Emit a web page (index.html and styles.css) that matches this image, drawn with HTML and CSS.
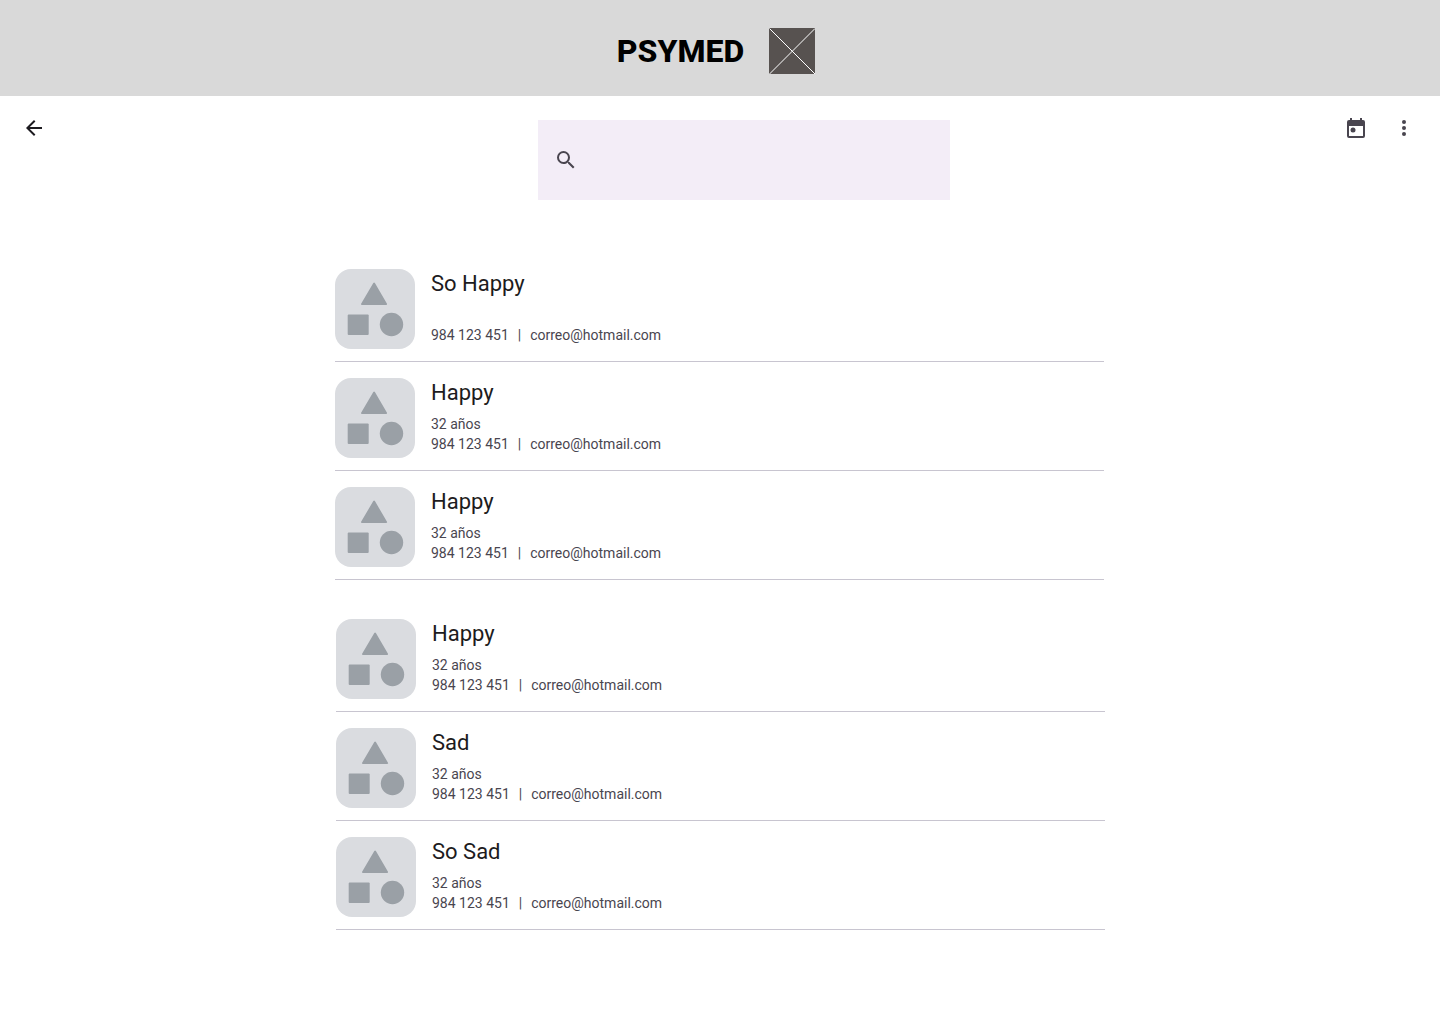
FILE: index.html
```html
<!DOCTYPE html>
<html lang="es">
<head>
<meta charset="utf-8">
<meta name="viewport" content="width=device-width, initial-scale=1">
<title>PSYMED</title>
<link rel="stylesheet" href="styles.css">
</head>
<body>
<svg class="sprite" aria-hidden="true">
  <symbol id="shapes" viewBox="0 0 80 80">
    <path d="M38.3 14a1 1 0 0 1 1.6 0L52 34.8a.8.8 0 0 1-.7 1.2H26.8a.8.8 0 0 1-.7-1.2z"/>
    <rect x="12.7" y="45.5" width="21" height="20.5" rx="1"/>
    <circle cx="56.5" cy="55.5" r="11.7"/>
  </symbol>
</svg>
<header class="banner">
  <h1 class="brand">PSYMED</h1>
  <svg class="logo" viewBox="0 0 46 46" aria-hidden="true"><path fill="#575250" d="M0 0h46v46H0z"/><path stroke="#fff" d="M.5.5l45.5 45.5M46 .5l-45.5 45.5"/></svg>
</header>
<nav class="toolbar">
  <button class="icon-button back" type="button" aria-label="Volver">
    <svg class="icon" viewBox="0 0 24 24"><path d="M20 11H7.83l5.59-5.59L12 4l-8 8 8 8 1.41-1.41L7.83 13H20z"/></svg>
  </button>
  <label class="search">
    <svg class="icon" viewBox="0 0 24 24" aria-hidden="true"><path d="M15.5 14h-.79l-.28-.27A6.47 6.47 0 0 0 16 9.5 6.5 6.5 0 1 0 9.5 16c1.61 0 3.09-.59 4.23-1.57l.27.28v.79l5 4.99L20.49 19zm-6 0a4.5 4.5 0 1 1 0-9 4.5 4.5 0 0 1 0 9z"/></svg>
    <input class="search-input" type="search" aria-label="Buscar">
  </label>
  <div class="actions">
    <button class="icon-button" type="button" aria-label="Calendario">
      <svg class="icon" viewBox="0 0 24 24"><path d="M19 4h-1V2h-2v2H8V2H6v2H5a2 2 0 0 0-2 2v14a2 2 0 0 0 2 2h14a2 2 0 0 0 2-2V6a2 2 0 0 0-2-2zm0 16H5V10h14z"/><circle cx="9" cy="14" r="2.5"/></svg>
    </button>
    <button class="icon-button" type="button" aria-label="Más opciones">
      <svg class="icon" viewBox="0 0 24 24"><circle cx="12" cy="6" r="2"/><circle cx="12" cy="12" r="2"/><circle cx="12" cy="18" r="2"/></svg>
    </button>
  </div>
</nav>
<main class="patients">
  <ul class="list">
    <li class="item">
      <svg class="thumb" aria-hidden="true"><use href="#shapes"/></svg>
      <div class="details"><h2 class="name">So Happy</h2><p class="age"></p><p class="contact"><span>984 123 451</span><span>|</span><span>correo@hotmail.com</span></p></div>
    </li>
    <li class="item">
      <svg class="thumb" aria-hidden="true"><use href="#shapes"/></svg>
      <div class="details"><h2 class="name">Happy</h2><p class="age">32 años</p><p class="contact"><span>984 123 451</span><span>|</span><span>correo@hotmail.com</span></p></div>
    </li>
    <li class="item">
      <svg class="thumb" aria-hidden="true"><use href="#shapes"/></svg>
      <div class="details"><h2 class="name">Happy</h2><p class="age">32 años</p><p class="contact"><span>984 123 451</span><span>|</span><span>correo@hotmail.com</span></p></div>
    </li>
  </ul>
  <ul class="list list-end">
    <li class="item">
      <svg class="thumb" aria-hidden="true"><use href="#shapes"/></svg>
      <div class="details"><h2 class="name">Happy</h2><p class="age">32 años</p><p class="contact"><span>984 123 451</span><span>|</span><span>correo@hotmail.com</span></p></div>
    </li>
    <li class="item">
      <svg class="thumb" aria-hidden="true"><use href="#shapes"/></svg>
      <div class="details"><h2 class="name">Sad</h2><p class="age">32 años</p><p class="contact"><span>984 123 451</span><span>|</span><span>correo@hotmail.com</span></p></div>
    </li>
    <li class="item">
      <svg class="thumb" aria-hidden="true"><use href="#shapes"/></svg>
      <div class="details"><h2 class="name">So Sad</h2><p class="age">32 años</p><p class="contact"><span>984 123 451</span><span>|</span><span>correo@hotmail.com</span></p></div>
    </li>
  </ul>
</main>
</body>
</html>
```
FILE: styles.css
```css
* {
  box-sizing: border-box;
}

body {
  margin: 0;
  background: #fff;
  color: #1d1b20;
  font-family: Roboto, "Liberation Sans", sans-serif;
  font-size: 14px;
  line-height: 20px;
}

h1, h2, p, ul {
  margin: 0;
  padding: 0;
}

.sprite {
  position: absolute;
  width: 0;
  height: 0;
}

.banner {
  display: flex;
  align-items: center;
  justify-content: center;
  gap: 25px;
  padding: 28px 8px 22px 0;
  background: #d9d9d9;
}

.brand {
  color: #000;
  font-size: 32px;
  font-weight: 800;
  line-height: 40px;
}

.logo {
  width: 46px;
  height: 46px;
}

.toolbar {
  display: grid;
  grid-template-columns: 1fr auto 1fr;
  align-items: start;
  padding: 0 12px;
}

.icon-button {
  display: flex;
  align-items: center;
  justify-content: center;
  width: 48px;
  height: 48px;
  margin-top: 8px;
  padding: 0;
  border: 0;
  background: none;
  color: #49454f;
}

.back {
  width: 44px;
  color: #1d1b20;
}

.icon {
  flex: none;
  width: 24px;
  height: 24px;
  fill: currentColor;
}

.search {
  display: flex;
  align-items: center;
  gap: 16px;
  width: 412px;
  height: 80px;
  margin: 24px 0 0 48px;
  padding: 0 16px;
  background: #f3edf7;
  color: #49454f;
}

.search-input {
  flex: 1;
  min-width: 0;
  height: 48px;
  border: 0;
  outline: 0;
  background: none;
  font: inherit;
}

.actions {
  display: flex;
  justify-content: flex-end;
}

.patients {
  display: flex;
  flex-direction: column;
  gap: 23px;
  max-width: 770px;
  margin: 53px auto 0;
  padding-bottom: 48px;
}

.list {
  margin-right: 1px;
  list-style: none;
}

.list-end {
  margin: 0 0 0 1px;
}

.item {
  display: flex;
  gap: 16px;
  padding: 16px 0 12px;
  border-bottom: 1px solid #c8c5d0;
}

.thumb {
  flex: none;
  width: 80px;
  height: 80px;
  border-radius: 16px;
  background: #dadce0;
  fill: #9aa0a6;
}

.name {
  margin-bottom: 6px;
  font-size: 22px;
  font-weight: 400;
  line-height: 30px;
}

.age,
.contact {
  min-height: 20px;
  color: #49454f;
}

.contact {
  display: flex;
  gap: 9px;
}
```
